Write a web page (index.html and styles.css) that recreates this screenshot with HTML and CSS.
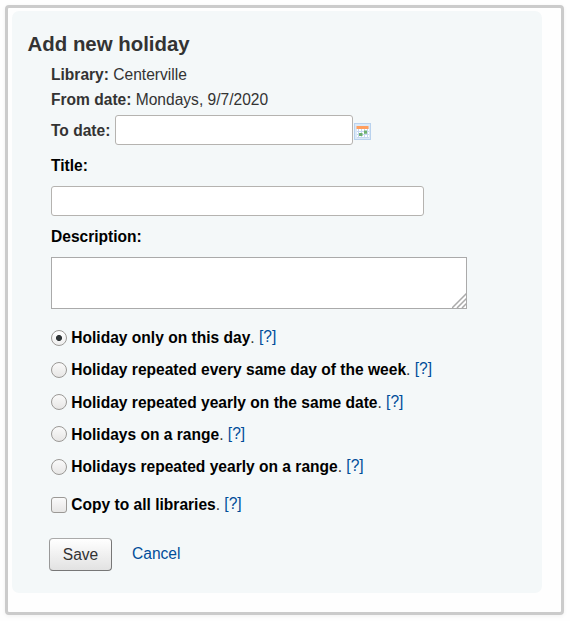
FILE: index.html
```
<!DOCTYPE html>
<html lang="en">
<head>
<meta charset="utf-8">
<title>Add new holiday</title>
<link rel="stylesheet" href="styles.css">
</head>
<body>
<main class="frame">
<form class="panel">
  <h1>Add new holiday</h1>
  <div class="fields">
    <div class="info"><b>Library:</b> Centerville</div>
    <div class="info"><b>From date:</b> Mondays, 9/7/2020</div>
    <div class="to-date">
      <label for="to">To date:</label>
      <input class="text date" id="to" type="text">
      <svg class="calendar" width="17" height="17" viewBox="0 0 17 17">
        <path fill="#b9d2ee" d="M0 0h17v17H0z"/>
        <path fill="#dce9f7" d="M1 1h15v15H1z"/>
        <path fill="#fff" d="M3 6h12v9H3z"/>
        <path fill="#c6d8f0" d="M3 8h12v1H3zM3 11h12v1H3zM3 14h12v1H3zM4 6h1v9H4zM7 6h1v9H7zM10 6h1v9h-1zM13 6h1v9h-1z"/>
        <path fill="#ff9f5f" d="M2.500 3h12v3h-12z"/>
        <path fill="#6db070" d="M10 7.500h3v3.300h-3zM5 10h3.500v3H5z"/>
      </svg>
    </div>
    <label class="caption" for="title">Title:</label>
    <input class="text title" id="title" type="text">
    <label class="caption" for="desc">Description:</label>
    <div class="area">
      <textarea id="desc"></textarea>
      <svg class="grip" width="15" height="15" viewBox="0 0 15 15"><path fill="none" stroke="#aaa" stroke-width="1.500" d="M0 15L15 0M5 15L15 5M10 15l5-5"/></svg>
    </div>
    <div class="options">
      <div class="option"><input type="radio" name="type" id="r1" checked><label for="r1">Holiday only on this day</label><span>.</span><a href="#">[?]</a></div>
      <div class="option"><input type="radio" name="type" id="r2"><label for="r2">Holiday repeated every same day of the week</label><span>.</span><a href="#">[?]</a></div>
      <div class="option"><input type="radio" name="type" id="r3"><label for="r3">Holiday repeated yearly on the same date</label><span>.</span><a href="#">[?]</a></div>
      <div class="option"><input type="radio" name="type" id="r4"><label for="r4">Holidays on a range</label><span>.</span><a href="#">[?]</a></div>
      <div class="option"><input type="radio" name="type" id="r5"><label for="r5">Holidays repeated yearly on a range</label><span>.</span><a href="#">[?]</a></div>
    </div>
    <div class="option copy"><input type="checkbox" id="all"><label for="all">Copy to all libraries</label><span>.</span><a href="#">[?]</a></div>
    <div class="actions"><button type="button">Save</button><a href="#">Cancel</a></div>
  </div>
</form>
</main>
</body>
</html>
```
FILE: styles.css
```
* { box-sizing: border-box; }
body {
  margin: 0;
  padding: 5px;
  background: #fefefe;
  color: #333;
  font: 15.57px/24px "Liberation Sans", Arial, sans-serif;
}
.frame {
  width: 559px;
  height: 610px;
  padding: 3px 4px;
  border: 3px solid #cbcbcb;
  border-radius: 4px;
  background: #fefefe;
  box-shadow: 0 1px 4px rgba(0, 0, 0, .06);
}
.panel {
  width: 530px;
  height: 582px;
  padding: 17px 0 0 16px;
  border-radius: 7px;
  background: #f4f8f9;
}
h1 { margin: 0 0 0 -0.4px; font-size: 20.4px; line-height: 32px; }
.fields { padding: 2px 0 0 23px; }
.info { line-height: 25px; }
.to-date { display: flex; align-items: center; height: 30px; margin-top: 3px; }
.to-date label { width: 64px; padding-top: 2px; font-weight: bold; white-space: nowrap; }
.calendar { margin: 3px 0 0 1px; }
.text, textarea {
  display: block;
  margin: 0;
  border: 1px solid #b5b3b0;
  background: #fff;
}
.text { height: 30px; border-radius: 3px; }
.date { width: 238px; }
.title { width: 373px; }
.caption { display: block; margin: 9px 0 8px; color: #000; font-weight: bold; }
.area { position: relative; width: 416px; height: 52px; }
textarea { width: 416px; height: 52px; resize: none; border-color: #aaa; }
.grip { position: absolute; right: 0; bottom: 1px; }
.options { margin-top: 12px; }
.option { display: flex; align-items: center; height: 32px; }
.option:nth-child(2), .option:nth-child(4) { margin-bottom: 0.6px; }
.option input {
  flex: none;
  appearance: none;
  width: 16px;
  height: 16px;
  margin: 1px 4px 0 0;
  border: 1px solid #9b9996;
  background: linear-gradient(#fafafa, #e7e6e5);
}
.option input[type="radio"] { border-radius: 50%; }
.option input[type="checkbox"] { border-radius: 3px; margin-top: 2px; }
.option input:checked { background: radial-gradient(circle, #2e3436 2.700px, transparent 3.300px), linear-gradient(#fff, #eee); }
.option label { margin-left: 0.3px; color: #000; font-weight: bold; }
.option label, .option span { padding-top: 2px; }
.option a { margin: 0 0 0 4.3px; }
a { color: #004d99; text-decoration: none; }
.options + .copy { height: 24px; margin-top: 9.8px; }
.actions { display: flex; margin: 22px 0 0 -2px; }
button {
  width: 63px;
  height: 33px;
  padding: 1px 0 0;
  border: 1px solid #777;
  border-top-color: #aaa;
  border-left-color: #999;
  border-radius: 4px;
  background: linear-gradient(#fff, #e2e2e2);
  color: #333;
  font: inherit;
}
.actions a { margin: 4px 0 0 20px; }
```
